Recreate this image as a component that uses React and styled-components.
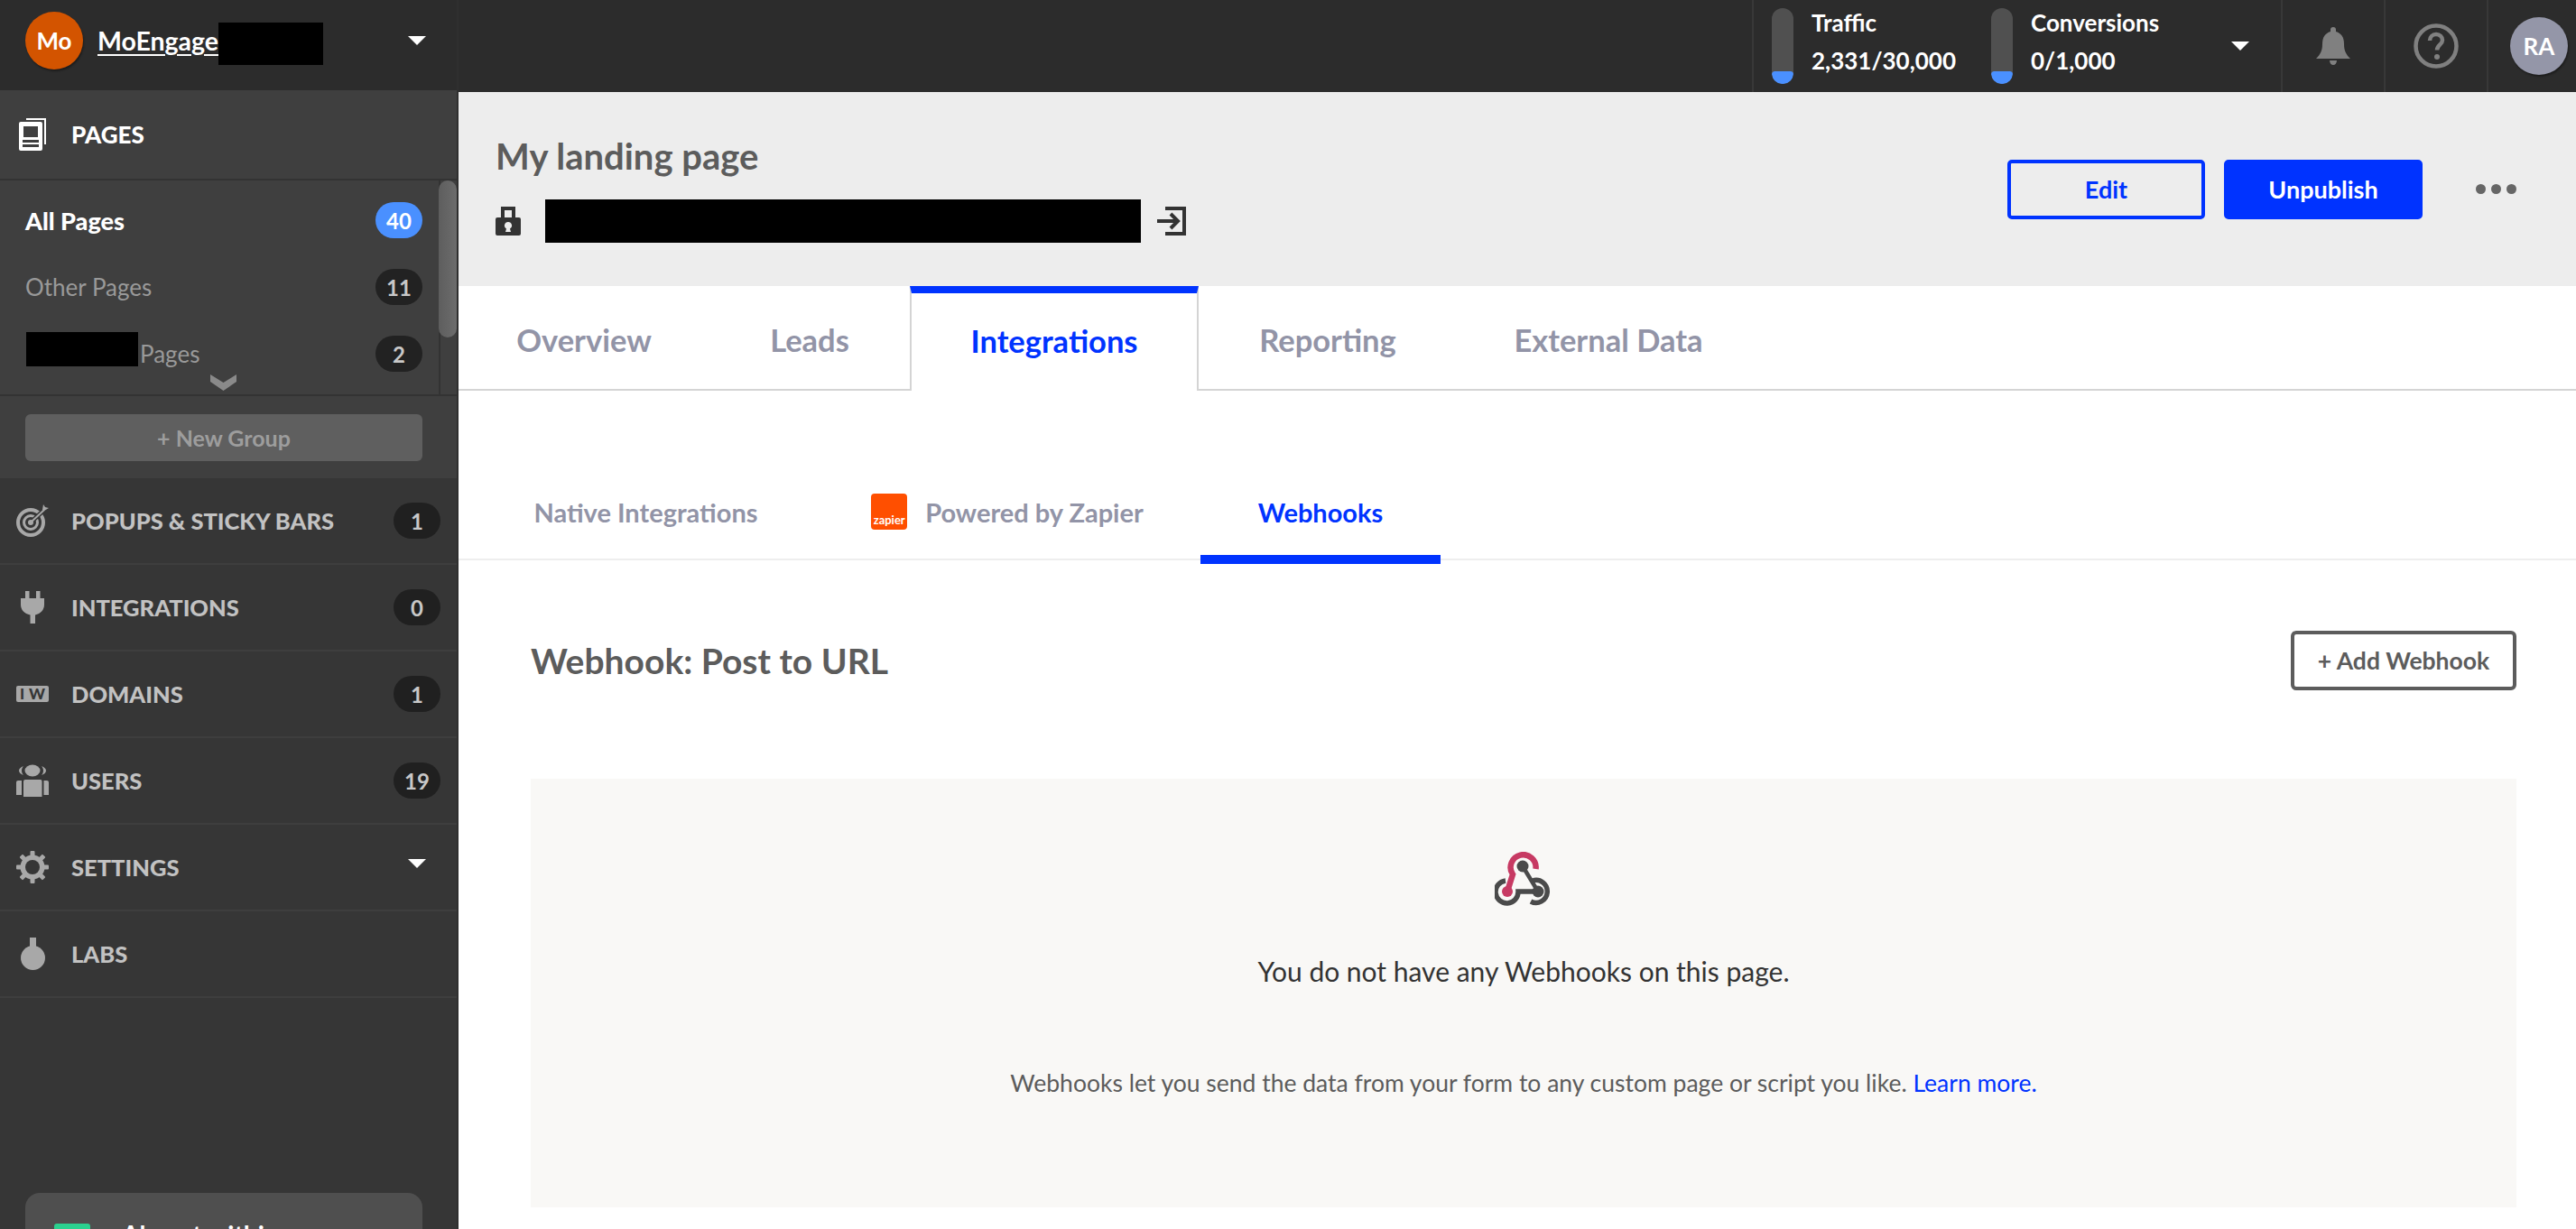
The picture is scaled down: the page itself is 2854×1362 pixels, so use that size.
import React from "react";
import styled, { createGlobalStyle } from "styled-components";

const BLUE = "#0033ff";

const GlobalStyle = createGlobalStyle`
  html, body { margin: 0; padding: 0; background: #fff; }
  body {
    width: 2854px;
    height: 1362px;
    overflow: hidden;
    font-family: "Lato", "Noto Sans", sans-serif;
  }
  * { box-sizing: border-box; }
`;

const Shell = styled.div`
  display: grid;
  grid-template-columns: 508px 1fr;
  width: 2854px;
  height: 1362px;
  overflow: hidden;
`;

/* sidebar */
const Sidebar = styled.aside`
  display: flex;
  flex-direction: column;
  background: #363636;
  border-right: 2px solid #2f2f2f;
  height: 1362px;
  overflow: hidden;
`;

const Account = styled.div`
  display: flex;
  align-items: center;
  height: 100px;
  padding: 0 34px 10px 28px;
  background: #2c2c2c;
`;

const Avatar = styled.div`
  display: flex;
  align-items: center;
  justify-content: center;
  flex: none;
  width: ${(p) => p.$size}px;
  height: ${(p) => p.$size}px;
  border-radius: 50%;
  background: ${(p) => p.$bg};
  box-shadow: 1px 2px 2px rgba(0, 0, 0, 0.35);
  color: #fff;
  font-size: 26px;
  font-weight: 700;
`;

const AccountName = styled.a`
  margin-left: 16px;
  color: #fff;
  font-size: 28.5px;
  font-weight: 700;
  text-decoration: underline;
  text-underline-offset: 4px;
`;

const Redacted = styled.span`
  display: block;
  flex: none;
  width: ${(p) => p.$w}px;
  height: ${(p) => p.$h}px;
  background: #000;
`;

const AccountRedacted = styled(Redacted)`
  margin-top: 7px;
`;

const GroupRedacted = styled(Redacted)`
  margin: 0 2px 10px 1px;
`;

const Caret = styled.span`
  flex: none;
  margin-left: auto;
  width: 0;
  height: 0;
  border-left: 10px solid transparent;
  border-right: 10px solid transparent;
  border-top: 10px solid #fff;
`;

const PagesHead = styled.div`
  display: flex;
  align-items: center;
  height: 100px;
  padding-left: 21px;
  background: #3f3f3f;
  border-bottom: 2px solid #333;
  color: #fff;
  font-size: 26px;
  font-weight: 900;
`;

const HeadIcon = styled.span`
  display: flex;
  justify-content: center;
  flex: none;
  width: 30px;
  margin-right: 28px;
`;

const PagesBlock = styled.div`
  position: relative;
  display: flex;
  flex-direction: column;
  height: 239px;
  padding: 7px 38px 0 28px;
  background: #3f3f3f;
  border-bottom: 2px solid #333;
`;

const GroupRow = styled.div`
  display: flex;
  align-items: center;
  flex: none;
  height: 74px;
  color: ${(p) => (p.$active ? "#fff" : "#999")};
  font-size: ${(p) => (p.$active ? 27 : 26)}px;
  font-weight: ${(p) => (p.$active ? 900 : 400)};
`;

const Count = styled.span`
  display: flex;
  align-items: center;
  justify-content: center;
  flex: none;
  width: 52px;
  height: 40px;
  margin-left: auto;
  border-radius: 20px;
  background: ${(p) => (p.$active ? "#4a90ff" : "#222")};
  color: ${(p) => (p.$active ? "#fff" : "#c8c8c8")};
  font-size: 24px;
  font-weight: 700;
`;

const ScrollTrack = styled.div`
  position: absolute;
  top: 0;
  right: 0;
  bottom: 0;
  width: 20px;
  border-left: 2px solid #333;
`;

const ScrollThumb = styled.div`
  width: 20px;
  height: 174px;
  margin-left: -2px;
  border-radius: 10px;
  background: linear-gradient(to right, #5e5e5e, #6c6c6c);
`;

const MoreChevron = styled.svg`
  position: absolute;
  left: 233px;
  bottom: 4px;
`;

const NewGroupWrap = styled.div`
  height: 91px;
  padding: 20px 38px 19px 28px;
  background: #3f3f3f;
`;

const NewGroup = styled.button`
  display: block;
  width: 440px;
  height: 52px;
  padding: 0;
  border: 0;
  border-radius: 6px;
  background: #5f5f5f;
  color: #9d9d9d;
  font-family: inherit;
  font-size: 25px;
  font-weight: 700;
`;

const NavRow = styled.div`
  display: flex;
  align-items: center;
  flex: none;
  height: 96px;
  padding: 0 18px;
  border-bottom: 2px solid #3e3e3e;
  color: #c2c2c2;
  font-size: 25.5px;
  font-weight: 900;
`;

const NavIcon = styled.span`
  display: flex;
  justify-content: center;
  flex: none;
  width: 36px;
  margin-right: 25px;
`;

const NavCount = styled(Count)`
  background: #202020;
`;

const NavCaret = styled(Caret)`
  margin-right: 16px;
  margin-bottom: 8px;
`;

const DomainBadge = styled.span`
  display: flex;
  align-items: center;
  justify-content: center;
  gap: 5px;
  width: 36px;
  height: 18px;
  border-radius: 2px;
  background: #a8a8a8;
  color: #363636;
  font-size: 17px;
  font-weight: 900;
  line-height: 18px;
`;

const Upsell = styled.div`
  display: flex;
  gap: 35px;
  margin: auto 38px 0 28px;
  height: 40px;
  padding: 34px 32px 0;
  background: #4f4f4f;
  border-radius: 16px 16px 0 0;
  color: #fff;
  font-size: 28px;
  font-weight: 700;
  line-height: 24px;
`;

const UpsellMark = styled.span`
  flex: none;
  width: 40px;
  height: 30px;
  border-radius: 3px;
  background: #2bd18f;
`;

/* main column */
const Main = styled.main`
  display: flex;
  flex-direction: column;
  min-width: 0;
  background: #fff;
`;

const TopBar = styled.header`
  display: flex;
  justify-content: flex-end;
  height: 102px;
  background: #2c2c2c;
`;

const UsageGroup = styled.div`
  display: flex;
  align-items: center;
  width: 586px;
  padding: 0 35px 0 20px;
  border-left: 2px solid #383838;
`;

const Usage = styled.div`
  display: flex;
  gap: 20px;
  width: ${(p) => p.$w}px;
  flex: none;
`;

const Gauge = styled.div`
  position: relative;
  flex: none;
  width: 24px;
  height: 84px;
  border-radius: 12px;
  background: #505050;
  overflow: hidden;
`;

const GaugeFill = styled.span`
  position: absolute;
  left: 0;
  right: 0;
  bottom: 0;
  height: 14px;
  background: #4a90ff;
  border-radius: 4px 4px 12px 12px;
`;

const UsageText = styled.div`
  display: flex;
  flex-direction: column;
  gap: 10px;
  color: #fff;
  font-size: 26px;
  font-weight: 700;
  line-height: 32px;
  white-space: nowrap;
`;

const TopCell = styled.div`
  display: flex;
  align-items: center;
  justify-content: center;
  flex: none;
  width: ${(p) => p.$w}px;
  border-left: 2px solid #383838;
`;

const AvatarCell = styled(TopCell)`
  justify-content: flex-start;
  padding-left: 24px;
`;

const PageHeader = styled.section`
  display: flex;
  align-items: center;
  height: 215px;
  padding: 0 66px 0 41px;
  background: #ededed;
`;

const TitleBlock = styled.div`
  display: flex;
  flex-direction: column;
  gap: 23px;
  margin-top: -3px;
`;

const PageTitle = styled.h1`
  margin: 0;
  color: #5c5c5c;
  font-size: 40px;
  font-weight: 700;
  line-height: 50px;
`;

const UrlRow = styled.div`
  display: flex;
  align-items: center;
  gap: 18px;
`;

const LockWrap = styled.span`
  display: flex;
  margin: 0 9px 0 0;
`;

const HeaderActions = styled.div`
  display: flex;
  align-items: center;
  margin-left: auto;
`;

const ActionButton = styled.button`
  width: ${(p) => p.$w}px;
  height: 66px;
  margin-right: 21px;
  padding: 0;
  border: 4px solid ${BLUE};
  border-radius: 5px;
  background: ${(p) => (p.$solid ? BLUE : "transparent")};
  color: ${(p) => (p.$solid ? "#fff" : BLUE)};
  font-family: inherit;
  font-size: 27px;
  font-weight: 700;
`;

const Dots = styled.span`
  display: flex;
  gap: 6px;
  margin-left: 38px;
`;

const Dot = styled.i`
  display: block;
  width: 11px;
  height: 11px;
  border-radius: 50%;
  background: #666;
`;

const Tabs = styled.nav`
  display: flex;
  height: 116px;
  border-bottom: 2px solid #d4d4d4;
`;

const Tab = styled.div`
  display: flex;
  align-items: center;
  justify-content: center;
  flex: none;
  width: ${(p) => p.$w}px;
  height: ${(p) => (p.$active ? "116px" : "114px")};
  padding-top: ${(p) => (p.$active ? "0" : "4px")};
  padding-bottom: ${(p) => (p.$active ? "3px" : "0")};
  background: #fff;
  border-top: ${(p) => (p.$active ? `8px solid ${BLUE}` : "0")};
  border-left: ${(p) => (p.$active ? "2px solid #d4d4d4" : "0")};
  border-right: ${(p) => (p.$active ? "2px solid #d4d4d4" : "0")};
  color: ${(p) => (p.$active ? BLUE : "#9294a7")};
  font-size: 34.5px;
  font-weight: 700;
`;

const SubTabs = styled.nav`
  display: flex;
  align-items: stretch;
  height: 188px;
  border-bottom: 2px solid #eee;
`;

const SubTab = styled.div`
  position: relative;
  display: flex;
  align-items: center;
  justify-content: center;
  gap: 20px;
  flex: none;
  width: ${(p) => p.$w}px;
  margin-left: ${(p) => p.$ml || 0}px;
  padding-top: 82px;
  color: ${(p) => (p.$active ? BLUE : "#9294a7")};
  font-size: 29px;
  font-weight: 700;
  &::after {
    content: "";
    display: ${(p) => (p.$active ? "block" : "none")};
    position: absolute;
    left: 0;
    right: 0;
    bottom: -6px;
    height: 10px;
    background: ${BLUE};
  }
`;

const ZapierMark = styled.span`
  display: flex;
  align-items: flex-end;
  justify-content: center;
  flex: none;
  width: 40px;
  height: 40px;
  padding-bottom: 4px;
  border-radius: 4px;
  background: #ff4f00;
  color: #fff;
  font-size: 13px;
  font-weight: 700;
  line-height: 14px;
`;

const Content = styled.div`
  padding: 0 66px 0 80px;
`;

const SectionHead = styled.div`
  display: flex;
  align-items: center;
  justify-content: space-between;
  height: 242px;
  padding-bottom: 20px;
`;

const SectionTitle = styled.h2`
  margin: 0;
  color: #5c5c5c;
  font-size: 39px;
  font-weight: 700;
`;

const AddButton = styled.button`
  width: 250px;
  height: 66px;
  padding: 0;
  border: 4px solid #5c5c5c;
  border-radius: 6px;
  background: #fff;
  color: #5c5c5c;
  font-family: inherit;
  font-size: 26.5px;
  font-weight: 700;
`;

const EmptyPanel = styled.div`
  display: flex;
  flex-direction: column;
  align-items: center;
  height: 475px;
  padding-top: 81px;
  background: #f9f8f6;
`;

const EmptyTitle = styled.p`
  margin: 52px 0 0;
  color: #333;
  font-size: 30px;
  line-height: 40px;
`;

const EmptyNote = styled.p`
  margin: 87px 0 0;
  color: #5c5c5c;
  font-size: 26.5px;
  line-height: 34px;
`;

const LearnMore = styled.a`
  color: ${BLUE};
`;

/* drawings */
const PagesIcon = () => (
  <svg width="30" height="36" viewBox="0 0 30 36" fill="#fff">
    <path d="M8 0h22v29h-2V2H8z" />
    <path fillRule="evenodd" d="M2 4h22a2 2 0 0 1 2 2v28a2 2 0 0 1-2 2H2a2 2 0 0 1-2-2V6a2 2 0 0 1 2-2zm3 5v12h16V9zm-1 15v3h18v-3zm0 5v3h18v-3z" />
  </svg>
);

const TargetIcon = () => (
  <svg width="36" height="36" viewBox="0 0 36 36" fill="none" stroke="#a8a8a8">
    <circle cx="16" cy="20" r="14" strokeWidth="4" />
    <circle cx="16" cy="20" r="7.500" strokeWidth="3" />
    <path d="M16 20L31 6" stroke="#363636" strokeWidth="5" />
    <circle cx="16" cy="20" r="3" fill="#a8a8a8" stroke="none" />
    <path d="M16 20L31 6" strokeWidth="2" />
    <path d="M29 6l1-6 2 3 4 1-5 3z" fill="#a8a8a8" stroke="none" />
  </svg>
);

const PlugIcon = () => (
  <svg width="26" height="36" viewBox="0 0 26 36" fill="#a8a8a8">
    <path d="M5 0h4.500v8h7.500V0h4.500v8H26v7c0 6-4 10-10 11.500V36h-5.500V26.500C4 25 0 21 0 15V8h5z" />
  </svg>
);

const UsersIcon = () => (
  <svg width="36" height="36" viewBox="0 0 36 36" fill="#a8a8a8">
    <ellipse cx="18" cy="7" rx="8.500" ry="6.500" />
    <path d="M8 2C5 3 3 5 3 7s2 4 5 5c-1-1-2-3-2-5s1-4 2-5zM28 2c3 1 5 3 5 5s-2 4-5 5c1-1 2-3 2-5s-1-4-2-5z" />
    <path d="M10 17h16a2 2 0 0 1 2.500 2v17H8V19a2 2 0 0 1 2-2zM0 20a2 2 0 0 1 2-2h4v16H0zM30.500 18H34a2 2 0 0 1 2 2v14h-5.500z" />
  </svg>
);

const GearIcon = () => (
  <svg width="36" height="36" viewBox="0 0 36 36">
    <circle cx="18" cy="18" r="10.500" fill="none" stroke="#a8a8a8" strokeWidth="6" />
    <g fill="#a8a8a8">
      <rect x="15.500" y="0" width="5" height="36" rx="1" />
      <rect x="15.500" y="0" width="5" height="36" rx="1" transform="rotate(45 18 18)" />
      <rect x="15.500" y="0" width="5" height="36" rx="1" transform="rotate(90 18 18)" />
      <rect x="15.500" y="0" width="5" height="36" rx="1" transform="rotate(135 18 18)" />
    </g>
    <circle cx="18" cy="18" r="8" fill="#363636" />
  </svg>
);

const LabsIcon = () => (
  <svg width="27" height="36" viewBox="0 0 27 36" fill="#a8a8a8">
    <rect x="10" y="0" width="7" height="14" />
    <circle cx="13.500" cy="22.500" r="13.500" />
  </svg>
);

const ChevronIcon = () => (
  <MoreChevron width="29" height="18" viewBox="0 0 29 18" fill="#8a8a8a">
    <path d="M0 0l14.500 9L29 0v8L14.500 18 0 8z" />
  </MoreChevron>
);

const BellIcon = () => (
  <svg width="38" height="42" viewBox="0 0 38 42" fill="#808080">
    <path d="M16 3a3 3 0 0 1 6 0v2c6 2 9 6 9 14 0 7 2 11 7 16H0c5-5 7-9 7-16 0-8 3-12 9-14z" />
    <path d="M15 37h8c0 3-2 5-4 5s-4-2-4-5z" />
  </svg>
);

const HelpIcon = () => (
  <svg width="50" height="50" viewBox="0 0 50 50" fill="none">
    <circle cx="25" cy="25" r="22.500" stroke="#808080" strokeWidth="4.500" />
    <path d="M18 19c0-4 3-7 7-7s7 3 7 6.500c0 5-6 5.500-6 11" stroke="#808080" strokeWidth="4.500" />
    <circle cx="26" cy="37" r="3" fill="#808080" />
  </svg>
);

const LockIcon = () => (
  <svg width="28" height="32" viewBox="0 0 28 32" fill="#333">
    <path fillRule="evenodd" d="M6 0h16v12h4a2 2 0 0 1 2 2v16a2 2 0 0 1-2 2H2a2 2 0 0 1-2-2V14a2 2 0 0 1 2-2h4zm4 4v8h8V4zm4 13a4 4 0 0 0-2 7.500L11 28h6l-1-3.500A4 4 0 0 0 14 17z" />
  </svg>
);

const OpenIcon = () => (
  <svg width="32" height="32" viewBox="0 0 32 32" fill="none" stroke="#333" strokeWidth="4">
    <path d="M9 2h21v28H9" />
    <path d="M0 16h22M15 8l8 8-8 8" />
  </svg>
);

const WebhookIcon = () => (
  <svg width="64" height="60" viewBox="0 0 64 60" fill="none">
    <path d="M12 32A12.500 12.500 0 1 0 26 44H48" stroke="#4a4a4a" strokeWidth="5.500" />
    <path d="M31 16L48 44" stroke="#4a4a4a" strokeWidth="4.500" />
    <path d="M40 55A12.500 12.500 0 1 0 42 32" stroke="#4a4a4a" strokeWidth="5.500" />
    <path d="M45.500 19A14 14 0 1 0 20 25L14 44" stroke="#c73a63" strokeWidth="6.500" />
    <circle cx="14" cy="44" r="6" fill="#c73a63" />
    <circle cx="31" cy="16" r="6.500" fill="#4a4a4a" />
    <circle cx="48" cy="44" r="6.500" fill="#4a4a4a" />
  </svg>
);

const navItems = [
  { label: "POPUPS & STICKY BARS", icon: <TargetIcon />, count: "1" },
  { label: "INTEGRATIONS", icon: <PlugIcon />, count: "0" },
  { label: "DOMAINS", icon: <DomainBadge><span>I</span><span>W</span></DomainBadge>, count: "1" },
  { label: "USERS", icon: <UsersIcon />, count: "19" },
  { label: "SETTINGS", icon: <GearIcon />, caret: true },
  { label: "LABS", icon: <LabsIcon /> },
];

const tabs = [
  { label: "Overview", w: 278 },
  { label: "Leads", w: 222 },
  { label: "Integrations", w: 320, active: true },
  { label: "Reporting", w: 286 },
  { label: "External Data", w: 336 },
];

const App = () => {
  return (
    <>
      <GlobalStyle />
      <Shell>
        <Sidebar>
          <Account>
            <Avatar $size={64} $bg="#d35400">Mo</Avatar>
            <AccountName>MoEngage</AccountName>
            <AccountRedacted $w={116} $h={47} />
            <Caret />
          </Account>
          <PagesHead>
            <HeadIcon><PagesIcon /></HeadIcon>
            PAGES
          </PagesHead>
          <PagesBlock>
            <GroupRow $active>
              All Pages
              <Count $active>40</Count>
            </GroupRow>
            <GroupRow>
              Other Pages
              <Count>11</Count>
            </GroupRow>
            <GroupRow>
              <GroupRedacted $w={124} $h={38} />
              Pages
              <Count>2</Count>
            </GroupRow>
            <ChevronIcon />
            <ScrollTrack><ScrollThumb /></ScrollTrack>
          </PagesBlock>
          <NewGroupWrap>
            <NewGroup>+ New Group</NewGroup>
          </NewGroupWrap>
          {navItems.map((item) => (
            <NavRow key={item.label}>
              <NavIcon>{item.icon}</NavIcon>
              {item.label}
              {item.count && <NavCount>{item.count}</NavCount>}
              {item.caret && <NavCaret />}
            </NavRow>
          ))}
          <Upsell>
            <UpsellMark />
            Almost within
          </Upsell>
        </Sidebar>
        <Main>
          <TopBar>
            <UsageGroup>
              <Usage $w={243}>
                <Gauge><GaugeFill /></Gauge>
                <UsageText>
                  <span>Traffic</span>
                  <span>2,331/30,000</span>
                </UsageText>
              </Usage>
              <Usage $w={240}>
                <Gauge><GaugeFill /></Gauge>
                <UsageText>
                  <span>Conversions</span>
                  <span>0/1,000</span>
                </UsageText>
              </Usage>
              <Caret />
            </UsageGroup>
            <TopCell $w={114}><BellIcon /></TopCell>
            <TopCell $w={114}><HelpIcon /></TopCell>
            <AvatarCell $w={99}>
              <Avatar $size={64} $bg="#9496a8">RA</Avatar>
            </AvatarCell>
          </TopBar>
          <PageHeader>
            <TitleBlock>
              <PageTitle>My landing page</PageTitle>
              <UrlRow>
                <LockWrap><LockIcon /></LockWrap>
                <Redacted $w={660} $h={48} />
                <OpenIcon />
              </UrlRow>
            </TitleBlock>
            <HeaderActions>
              <ActionButton $w={219}>Edit</ActionButton>
              <ActionButton $w={220} $solid>Unpublish</ActionButton>
              <Dots><Dot /><Dot /><Dot /></Dots>
            </HeaderActions>
          </PageHeader>
          <Tabs>
            {tabs.map((t) => (
              <Tab key={t.label} $w={t.w} $active={t.active}>{t.label}</Tab>
            ))}
          </Tabs>
          <SubTabs>
            <SubTab $w={415}>Native Integrations</SubTab>
            <SubTab $w={386}>
              <ZapierMark>zapier</ZapierMark>
              Powered by Zapier
            </SubTab>
            <SubTab $w={266} $ml={21} $active>Webhooks</SubTab>
          </SubTabs>
          <Content>
            <SectionHead>
              <SectionTitle>Webhook: Post to URL</SectionTitle>
              <AddButton>+ Add Webhook</AddButton>
            </SectionHead>
            <EmptyPanel>
              <WebhookIcon />
              <EmptyTitle>You do not have any Webhooks on this page.</EmptyTitle>
              <EmptyNote>
                Webhooks let you send the data from your form to any custom page or script you like.{" "}
                <LearnMore>Learn more.</LearnMore>
              </EmptyNote>
            </EmptyPanel>
          </Content>
        </Main>
      </Shell>
    </>
  );
};

export default App;
